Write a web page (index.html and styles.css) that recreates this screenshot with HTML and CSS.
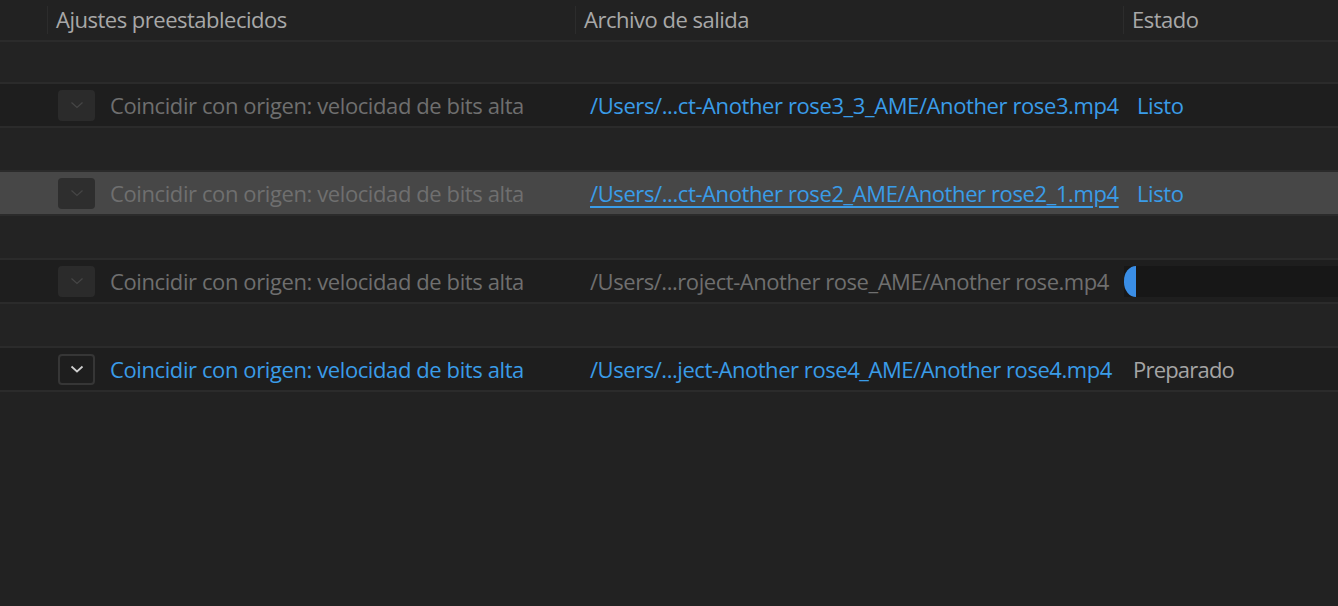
FILE: index.html
```html
<!DOCTYPE html>
<html lang="es">
<head>
<meta charset="utf-8">
<link rel="stylesheet" href="styles.css">
</head>
<body>
<div class="table">
  <div class="row header">
    <div class="cell"></div>
    <div class="cell hcell">Ajustes preestablecidos</div>
    <div class="cell hcell">Archivo de salida</div>
    <div class="cell hcell">Estado</div>
  </div>
  <div class="row group first"></div>
  <div class="row item">
    <div class="cell"></div>
    <div class="cell preset"><span class="drop"><svg viewBox="0 0 14 8" class="chev"><path d="M1.5 1.5 L7 6.5 L12.5 1.5"/></svg></span><span class="ptext">Coincidir con origen: velocidad de bits alta</span></div>
    <div class="cell out link">/Users/...ct-Another rose3_3_AME/Another rose3.mp4</div>
    <div class="cell status ok">Listo</div>
  </div>
  <div class="row group"></div>
  <div class="row item selected">
    <div class="cell"></div>
    <div class="cell preset"><span class="drop"><svg viewBox="0 0 14 8" class="chev"><path d="M1.5 1.5 L7 6.5 L12.5 1.5"/></svg></span><span class="ptext">Coincidir con origen: velocidad de bits alta</span></div>
    <div class="cell out link under">/Users/...ct-Another rose2_AME/Another rose2_1.mp4</div>
    <div class="cell status ok">Listo</div>
  </div>
  <div class="row group"></div>
  <div class="row item">
    <div class="cell"></div>
    <div class="cell preset"><span class="drop"><svg viewBox="0 0 14 8" class="chev"><path d="M1.5 1.5 L7 6.5 L12.5 1.5"/></svg></span><span class="ptext">Coincidir con origen: velocidad de bits alta</span></div>
    <div class="cell out dim">/Users/...roject-Another rose_AME/Another rose.mp4</div>
    <div class="cell status prog"><div class="bar"><div class="fill"></div></div></div>
  </div>
  <div class="row group"></div>
  <div class="row item active">
    <div class="cell"></div>
    <div class="cell preset"><span class="drop"><svg viewBox="0 0 14 8" class="chev"><path d="M1.5 1.5 L7 6.5 L12.5 1.5"/></svg></span><span class="ptext">Coincidir con origen: velocidad de bits alta</span></div>
    <div class="cell out link tight">/Users/...ject-Another rose4_AME/Another rose4.mp4</div>
    <div class="cell status ready">Preparado</div>
  </div>
</div>
</body>
</html>
```

FILE: styles.css
```css
html, body {
  margin: 0;
  padding: 0;
  background: #222222;
  height: 100%;
}
body {
  font-family: "Open Sans", "Noto Sans", sans-serif;
  font-size: 22px;
  letter-spacing: -0.4px;
  color: #a9a9a9;
  overflow: hidden;
}
.table {
  display: flex;
  flex-direction: column;
}
.row {
  display: grid;
  grid-template-columns: 47px 528px 548px 1fr;
  border-bottom: 2px solid #2b2b2b;
}
.header {
  height: 40px;
  background: #222222;
}
.hcell {
  position: relative;
  padding-left: 9px;
  padding-bottom: 2px;
  display: flex;
  align-items: center;
  white-space: nowrap;
  color: #a8a8a8;
  letter-spacing: -0.5px;
}
.hcell::before {
  content: "";
  position: absolute;
  left: 0;
  top: 6px;
  bottom: 6px;
  width: 1px;
  background: #2c2c2c;
}
.group {
  height: 42px;
  background: #232323;
}
.group.first {
  height: 40px;
}
.item {
  height: 42px;
  background: #1e1e1e;
  align-items: center;
}
.item.selected {
  background: #474747;
}
.cell {
  white-space: nowrap;
  overflow: hidden;
}
.preset {
  display: flex;
  align-items: center;
  padding-left: 11px;
  gap: 15px;
}
.drop {
  width: 37px;
  height: 31px;
  box-sizing: border-box;
  border-radius: 4px;
  background: #2b2b2b;
  display: flex;
  align-items: center;
  justify-content: center;
  flex: none;
}
.chev {
  width: 14px;
  height: 8px;
  fill: none;
  stroke: #464646;
  stroke-width: 1.2;
}
.selected .drop {
  background: #2e2e2e;
}
.ptext {
  color: #6f6f6f;
}
.active .drop {
  background: #1e1e1e;
  border: 2px solid #363636;
}
.active .chev {
  stroke: #d0d0d0;
  stroke-width: 1.7;
}
.active .ptext {
  color: #3a9ce8;
}
.out {
  padding-left: 15px;
}
.out.dim, .out.tight {
  letter-spacing: -0.45px;
}
.link {
  color: #3a9ce8;
}
.under {
  text-decoration: underline;
  text-decoration-thickness: 2px;
  text-underline-offset: 4px;
}
.dim {
  color: #6f6f6f;
}
.status.ok {
  padding-left: 14px;
  color: #3a9ce8;
}
.status.ready {
  padding-left: 10px;
  color: #a5a5a5;
  letter-spacing: -0.8px;
}
.prog {
  align-self: stretch;
  display: flex;
  align-items: center;
  padding-left: 1px;
}
.bar {
  flex: 1;
  height: 31px;
  background: #171717;
  display: flex;
}
.fill {
  width: 12px;
  height: 31px;
  background: #3a8ee6;
  border-radius: 13px 0 0 13px / 16px 0 0 16px;
}
```
